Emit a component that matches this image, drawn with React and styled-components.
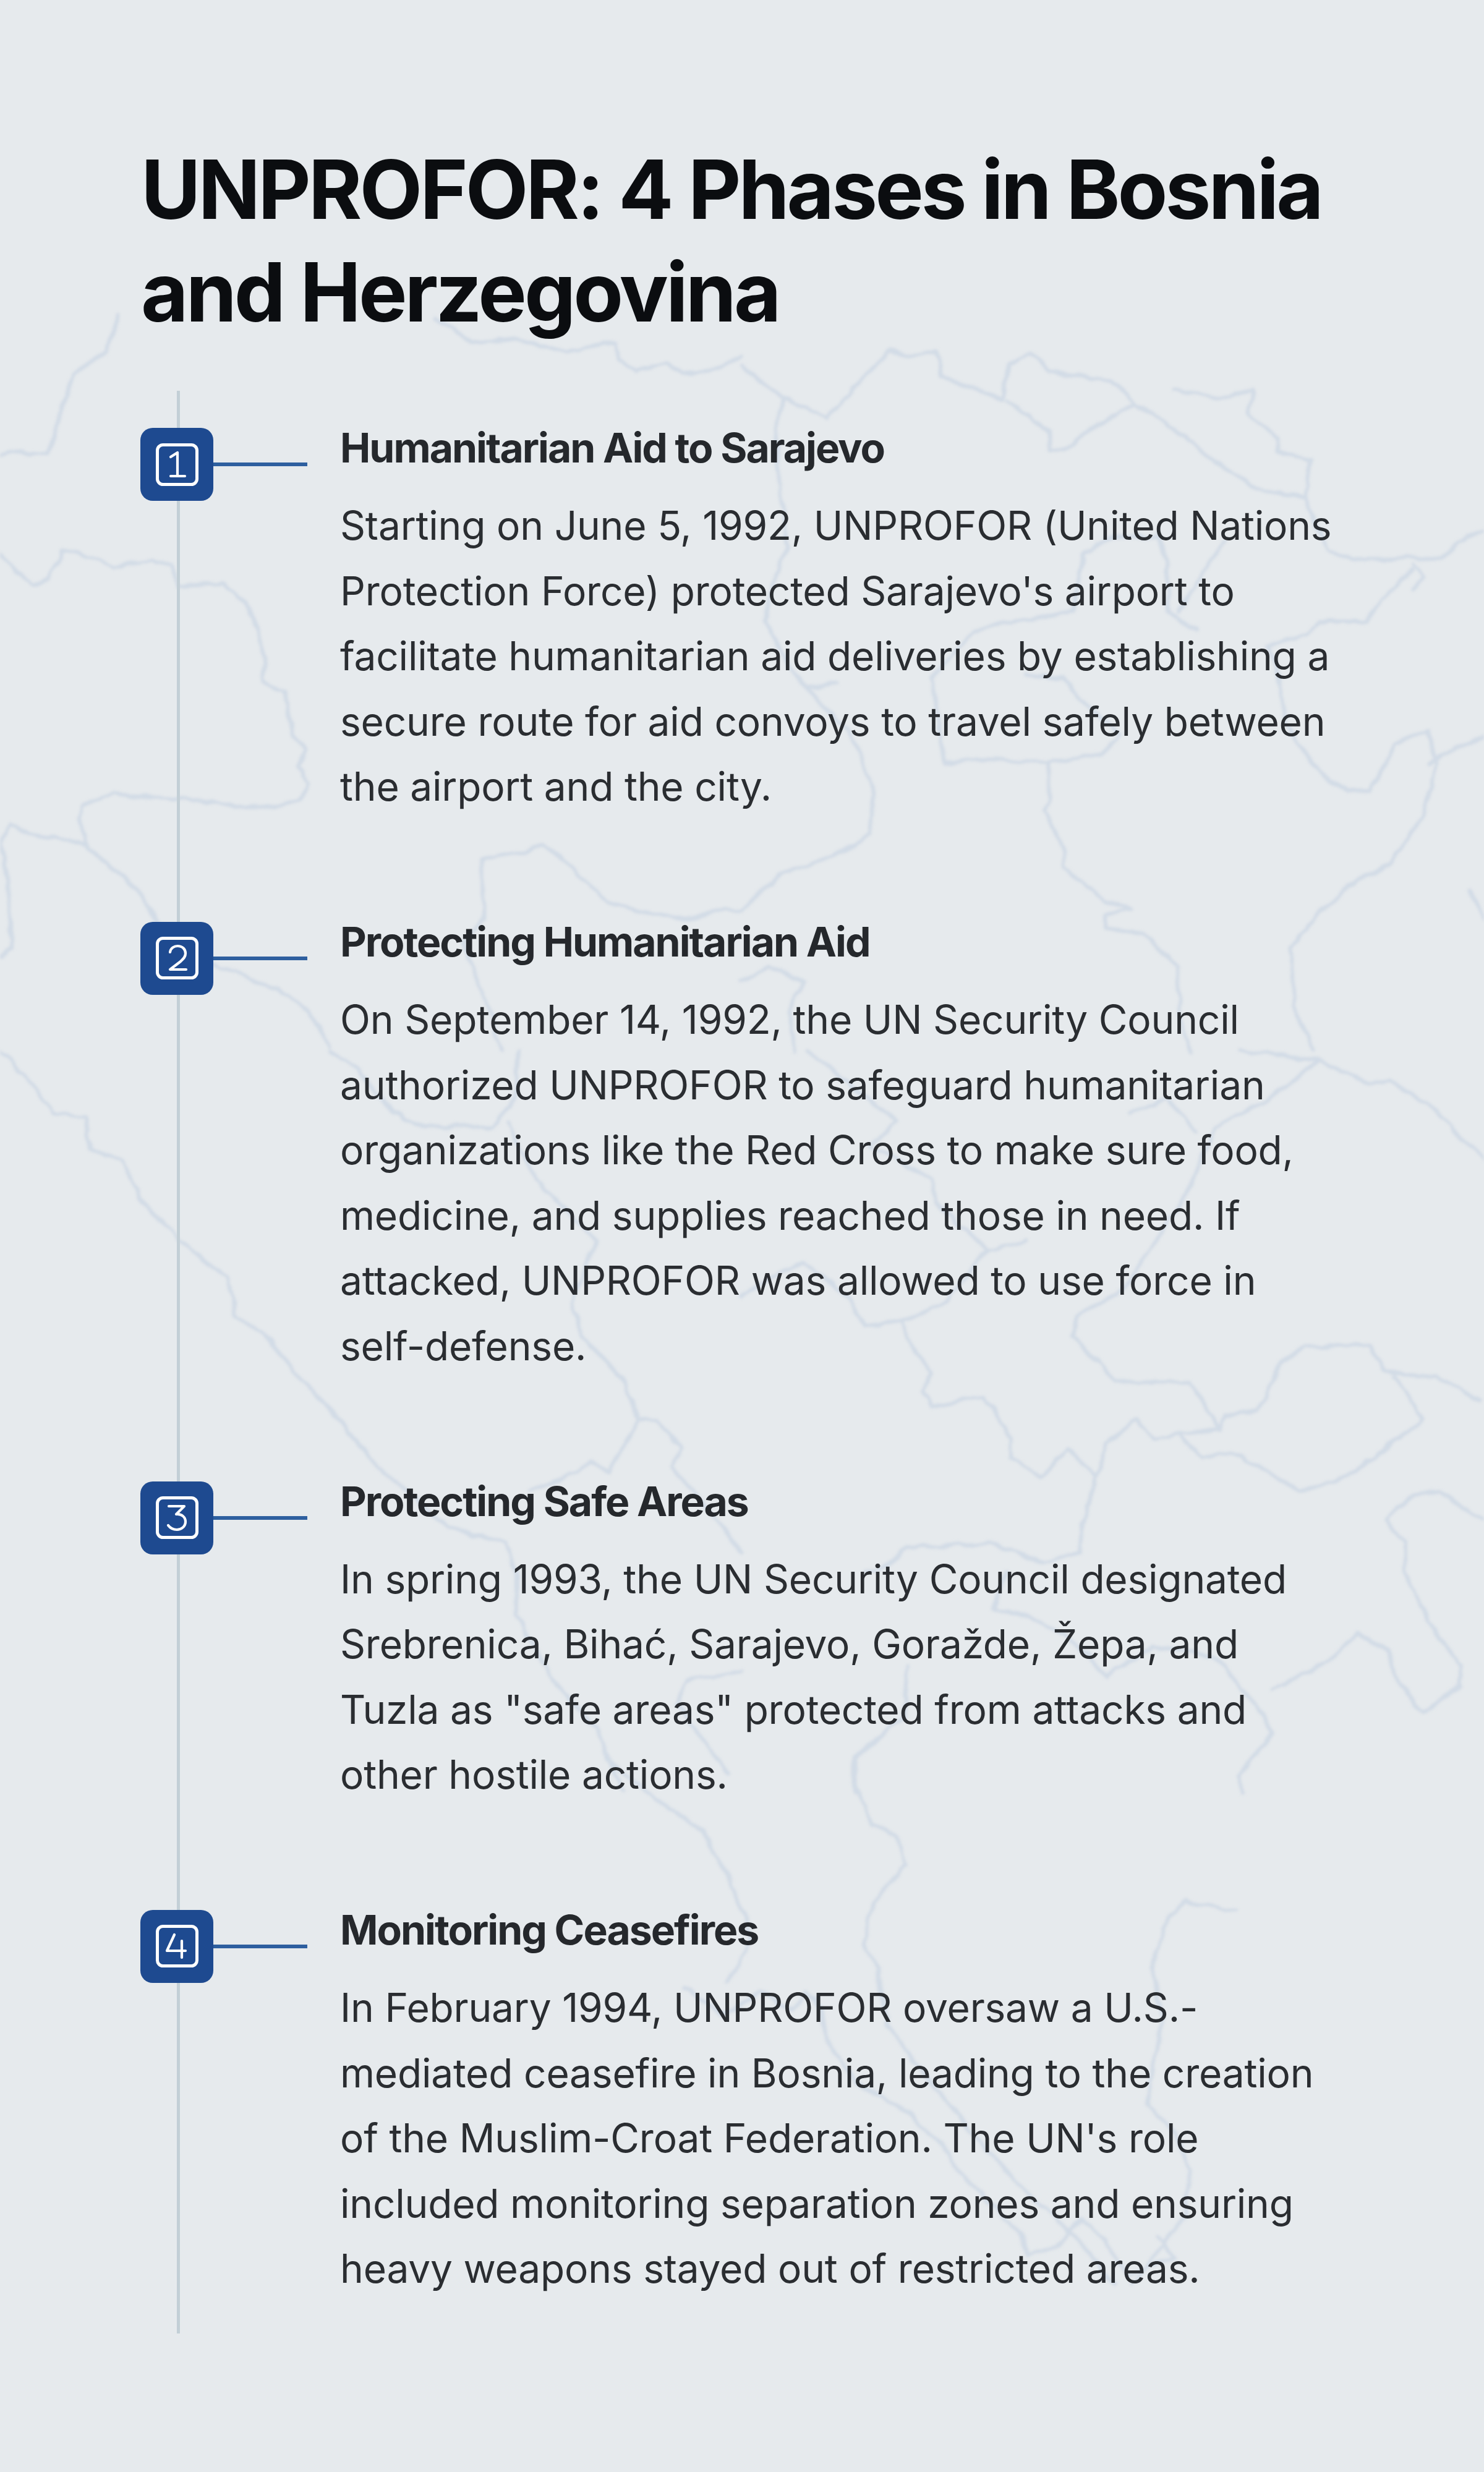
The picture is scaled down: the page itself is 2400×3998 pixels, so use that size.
import React from 'react';
import styled, {createGlobalStyle} from 'styled-components';

const GlobalStyle = createGlobalStyle`
  html, body {
    margin: 0;
    padding: 0;
    background: #e6eaed;
  }
`

const Page = styled.div`
  position: relative;
  width: 2400px;
  height: 3998px;
  overflow: hidden;
  background: #e6eaed;
  font-family: Inter, "Liberation Sans", sans-serif;
`

const MapBackdrop = styled.svg`
  position: absolute;
  top: 0;
  left: 0;
  width: 2400px;
  height: 3998px;

  path {
    fill: none;
    stroke: #d2dbe6;
    stroke-width: 6;
    stroke-linejoin: round;
    stroke-linecap: round;
  }
`

const Content = styled.main`
  position: relative;
  padding: 223px 230px 0 230px;
`

const Title = styled.h1`
  margin: 0 0 77px -2px;
  font-size: 132px;
  line-height: 166px;
  font-weight: 700;
  letter-spacing: -4px;
  color: #0b0d10;
`

const Timeline = styled.div`
  position: relative;
  display: flex;
  flex-direction: column;
  gap: 166px;
  padding: 60px 0 52px 0;

  &::before {
    content: "";
    position: absolute;
    left: 56px;
    top: 0;
    bottom: 0;
    width: 5px;
    background: #c3cfd6;
  }
`

const Phase = styled.section`
  position: relative;
  display: flex;
  align-items: flex-start;
  margin-left: -3px;
`

const Rail = styled.div`
  display: flex;
  align-items: center;
  flex: none;
  width: 323px;
`

const Marker = styled.div`
  display: flex;
  align-items: center;
  justify-content: center;
  flex: none;
  width: 118px;
  height: 118px;
  border-radius: 20px;
  background: #1e4a90;
`

const Connector = styled.div`
  flex: none;
  width: 152px;
  height: 6px;
  background: #2e5f9f;
`

const PhaseBody = styled.div`
  flex: none;
  width: 1612px;
`

const PhaseHeading = styled.h2`
  margin: -9px 0 32px 0;
  font-size: 66px;
  line-height: 82px;
  font-weight: 700;
  letter-spacing: -2px;
  color: #25282c;
`

const PhaseText = styled.p`
  margin: 0;
  font-size: 64px;
  line-height: 105.6px;
  font-weight: 400;
  letter-spacing: -0.2px;
  color: #2a2d31;
`

const DigitIcon = ({digit}) => (
    <svg width="69" height="69" viewBox="0 0 69 69" fill="none" stroke="#fff" strokeLinecap="round" strokeLinejoin="round">
        <rect x="2.5" y="2.5" width="64" height="64" rx="9" strokeWidth="5"/>
        <path d={digit} strokeWidth="4.2"/>
    </svg>
)

const digits = {
    1: "M24,22 L35,15 V53 M24,53 H47",
    2: "M23,25 C24,18 30,15 35,15 C43,15 48,20 48,27 C48,33 44,36 40,40 L23,53 H49",
    3: "M21,16 H46 L33,29 C42,28 48,34 48,41 C48,49 41,54 34,54 C28,54 23,51 20,47",
    4: "M30,16 L18,42 H48 M42,26 V53",
};

const phases = [
    {
        id: 1,
        heading: "Humanitarian Aid to Sarajevo",
        text: "Starting on June 5, 1992, UNPROFOR (United Nations Protection Force) protected Sarajevo's airport to facilitate humanitarian aid deliveries by establishing a secure route for aid convoys to travel safely between the airport and the city.",
    },
    {
        id: 2,
        heading: "Protecting Humanitarian Aid",
        text: "On September 14, 1992, the UN Security Council authorized UNPROFOR to safeguard humanitarian organizations like the Red Cross to make sure food, medicine, and supplies reached those in need. If attacked, UNPROFOR was allowed to use force in self-defense.",
    },
    {
        id: 3,
        heading: "Protecting Safe Areas",
        text: "In spring 1993, the UN Security Council designated Srebrenica, Bihać, Sarajevo, Goražde, Žepa, and Tuzla as \"safe areas\" protected from attacks and other hostile actions.",
    },
    {
        id: 4,
        heading: "Monitoring Ceasefires",
        text: "In February 1994, UNPROFOR oversaw a U.S.-mediated ceasefire in Bosnia, leading to the creation of the Muslim-Croat Federation. The UN's role included monitoring separation zones and ensuring heavy weapons stayed out of restricted areas.",
    },
];

// faint border map behind the text, traced in chunks (coords are local to each chunk)
const mapChunks = [
    {
        at: "translate(0 500) scale(.765)",
        lines: [
            "M0,310 L20,300 L100,305 L115,270 L130,210 L155,140 L225,90 L240,40 L250,10",
            "M920,20 L1000,70 L1090,60 L1200,90 L1300,70 L1310,110 L1345,130 L1410,115 L1440,135 L1500,130 L1568,100",
            "M0,515 L40,560 L70,585 L100,570 L135,510 L200,525 L240,545 L320,530 L365,545 L375,585 L470,580 L520,620 L545,690 L560,740 L555,785 L600,810 L620,900 L645,930 L630,970 L650,1000 L635,1040 L560,1055 L420,1040 L240,1025 L170,1050 L170,1090 L185,1140 L250,1190 L300,1240 L330,1290 L370,1340 L420,1370 L590,1440 L650,1480 L700,1560",
            "M0,1125 L25,1090 L60,1110 L120,1120 L185,1135",
            "M0,1130 L15,1200 L25,1300 L25,1350 L0,1370",
            "M1060,1568 L1040,1500 L1010,1420 L980,1340 L1020,1290 L1020,1160 L1090,1150 L1150,1135 L1200,1170 L1280,1250 L1340,1270 L1460,1290 L1530,1270 L1568,1270",
        ],
    },
    {
        at: "translate(1200 500) scale(.765)",
        lines: [
            "M0,120 L90,190 L180,230 L250,150 L310,90 L360,100 L410,90 L420,140 L550,190 L565,115 L610,95 L650,130 L780,150 L830,200 L870,220 L920,260 L1000,320 L1090,380 L1190,400 L1200,320 L1130,300 L1130,270 L1070,220 L1080,170 L1010,190 L960,180 L910,170",
            "M830,200 L780,230 L740,250 L680,300 L650,300 L650,260 L560,190",
            "M90,190 L70,250 L80,380 L100,500 L70,560 L50,660 L100,760 L140,800 L200,790",
            "M1090,380 L1190,400 L1240,510 L1290,530 L1480,525 L1530,480 L1568,470",
            "M1420,540 L1440,570 L1420,590 M1415,550 L1350,620 L1320,660 L1220,660 L1190,690 L1110,710 L1130,760 L1150,880 L1220,980 L1280,1020 L1330,1020 L1380,920 L1450,890 L1470,960 L1440,1070 L1370,1170 L1280,1220 L1190,1310 L1160,1350 L1170,1480 L1210,1568",
            "M1450,960 L1510,930 L1568,905",
            "M880,470 L900,540 L900,640 L960,680 M1020,490 L980,550 L920,640",
            "M880,480 L780,480 L720,520 L700,640 L520,670 L490,680 L400,780 L430,960 L500,950 L640,960 L760,940 L800,900 L700,810 L680,780 L600,770",
            "M650,960 L650,1040 L640,1060 L680,1140 L680,1180 L770,1250 L820,1270 L770,1280 L770,1310 L850,1320 L920,1390 L925,1500 L950,1568",
            "M100,760 L230,900 L280,1020 L270,1110 L190,1160 L90,1190 L20,1250 L0,1270",
            "M0,1420 L60,1390 L130,1420 L100,1480 L110,1568",
            "M1540,1230 L1568,1290",
        ],
    },
    {
        at: "translate(0 1700) scale(.765)",
        lines: [
            "M0,0 L20,20 L70,70 L110,130 L180,140 L190,210 L260,230 L300,320 L380,400 L480,480 L500,560 L570,610 L640,700 L710,770 L800,880 L850,920 L950,1010 L1070,1040 L1090,1100 L1090,1190 L1170,1330 L1260,1430 L1290,1500 L1320,1568",
            "M700,0 L760,40 L830,130 L900,160 L1040,160 L1090,100 L1095,0",
            "M1075,150 L1130,270 L1260,400 L1210,530 L1230,600 L1320,700 L1350,780 L1390,780 L1440,840 L1420,880 L1490,960 L1568,1060",
            "M1350,780 L1290,890 L1250,870 L1180,910 L1120,930",
            "M1568,1310 L1450,1330 L1430,1380 L1500,1470 L1540,1530",
        ],
    },
    {
        at: "translate(1200 1700) scale(.765)",
        lines: [
            "M140,0 L280,110 L330,150 L270,200 L400,270 L410,320 L520,420 L600,400",
            "M0,515 L80,470 L130,445 L220,520 L260,580 L340,570 L430,530 L520,420",
            "M340,570 L350,610 L400,680 L380,715 L400,750 L510,730 L570,820 L570,860 L630,900 L690,840 L730,880 L750,900 L770,830 L830,780 L870,820 L920,810 L1010,800 L1020,770 L1090,760 L1140,660 L1190,625 L1330,620 L1360,680 L1470,690 L1560,740",
            "M920,810 L970,860 L1040,850 L1180,930 L1280,900 L1440,780 L1380,690",
            "M1010,800 L950,700 L790,700 L700,600 L710,560 L810,500 L860,420 L940,300 L1000,160 L1100,110 L1220,20 L1330,70 L1370,60 L1460,120 L1540,200 L1568,230",
            "M820,130 L900,100 L960,170 M1050,0 L1220,20",
            "M750,900 L720,1000 L715,1060 L640,1080 L520,1040 L350,1050 L300,1090 L260,1100",
            "M560,1100 L530,1180 L600,1190 L690,1240 L770,1320 L870,1260 L1000,1280 L1100,1400 L1120,1440 L1050,1530 L1060,1568",
            "M350,1300 L340,1410 L240,1490 L240,1568",
            "M1568,990 L1470,930 L1420,940 L1360,990 L1400,1040 L1400,1100 L1460,1220 L1520,1300 L1520,1340 L1440,1400 L1380,1320 L1370,1270 L1300,1230 L1240,1290 L1120,1350",
        ],
    },
    {
        at: "translate(800 2800) scale(.765)",
        lines: [
            "M220,0 L240,60 L350,150 L440,210 L490,300 L545,440 L490,530",
            "M400,540 L480,600 L560,550 L630,590 L660,550 L690,590 L700,650 L760,740 L850,790 L930,860 L1000,950 L1110,1060 L1130,1110 L1190,1090 L1240,1030 L1290,1080 L1340,1150 L1440,1110 L1400,1070",
            "M830,0 L760,60 L760,110 L800,200 L850,220 L870,280 L800,360 L780,450 L810,500 L830,620 L920,740 L1010,850 L1100,950 L1240,1080 L1310,1170",
            "M1568,380 L1460,360 L1420,400 L1390,500 L1410,600 L1380,790 L1440,850 L1470,930 L1460,1020 L1380,1130 L1350,1170",
        ],
    },
];

const App = () => (
    <Page>
        <GlobalStyle/>
        <MapBackdrop viewBox="0 0 2400 3998" aria-hidden="true">
            <defs>
                <filter id="rough" x="0" y="0" width="100%" height="100%" filterUnits="userSpaceOnUse">
                    <feTurbulence type="fractalNoise" baseFrequency="0.035" numOctaves="2" seed="4"/>
                    <feDisplacementMap in="SourceGraphic" scale="12" xChannelSelector="R" yChannelSelector="G"/>
                    <feGaussianBlur stdDeviation="2"/>
                </filter>
            </defs>
            <g filter="url(#rough)">
                {mapChunks.map((chunk) => (
                    <g key={chunk.at} transform={chunk.at}>
                        {chunk.lines.map((d) => <path key={d} d={d} vectorEffect="non-scaling-stroke"/>)}
                    </g>
                ))}
            </g>
        </MapBackdrop>
        <Content>
            <Title>UNPROFOR: 4 Phases in Bosnia and Herzegovina</Title>
            <Timeline>
                {phases.map((phase) => (
                    <Phase key={phase.id}>
                        <Rail>
                            <Marker><DigitIcon digit={digits[phase.id]}/></Marker>
                            <Connector/>
                        </Rail>
                        <PhaseBody>
                            <PhaseHeading>{phase.heading}</PhaseHeading>
                            <PhaseText>{phase.text}</PhaseText>
                        </PhaseBody>
                    </Phase>
                ))}
            </Timeline>
        </Content>
    </Page>
);

export default App;
